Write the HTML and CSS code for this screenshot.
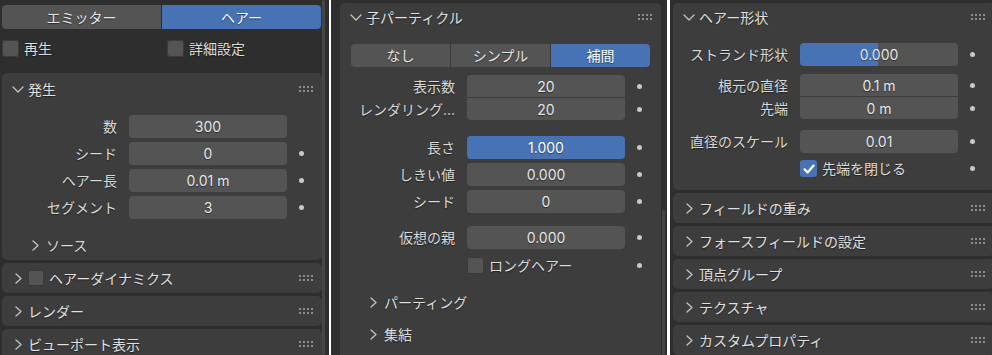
FILE: index.html
```html
<!DOCTYPE html>
<html lang="ja">
<head>
<meta charset="utf-8">
<title>Particles</title>
<link rel="stylesheet" href="styles.css">
</head>
<body>
<div class="screen">
  <!-- Column 1 -->
  <div class="col col1">
    <div class="tabs">
      <div class="tab">エミッター</div>
      <div class="tab active">ヘアー</div>
    </div>
    <div class="checks">
      <div class="chk"><span class="box"></span><span>再生</span></div>
      <div class="chk"><span class="box"></span><span>詳細設定</span></div>
    </div>

    <section class="panel p-gen">
      <div class="phead tall">
        <span class="chev"><svg width="12" height="7" viewBox="0 0 12 7"><path d="M1 1 L6 6 L11 1" /></svg></span>
        <span class="ptitle">発生</span>
        <span class="grip"><svg width="14" height="6" viewBox="0 0 14 6"><rect x="0" y="0" width="2" height="2"/><rect x="4" y="0" width="2" height="2"/><rect x="8" y="0" width="2" height="2"/><rect x="12" y="0" width="2" height="2"/><rect x="0" y="4" width="2" height="2"/><rect x="4" y="4" width="2" height="2"/><rect x="8" y="4" width="2" height="2"/><rect x="12" y="4" width="2" height="2"/></svg></span>
      </div>
      <div class="pbody b-gen">
        <div class="group">
          <div class="prop"><span class="label">数</span><span class="field">300</span><span></span></div>
          <div class="prop"><span class="label">シード</span><span class="field">0</span><span class="dot"></span></div>
          <div class="prop"><span class="label">ヘアー長</span><span class="field">0.01 m</span><span class="dot"></span></div>
          <div class="prop"><span class="label">セグメント</span><span class="field">3</span><span class="dot"></span></div>
        </div>
        <div class="sub sub-src">
          <span class="chev-c"><svg width="7" height="11" viewBox="0 0 7 11"><path d="M1 1 L6 5.5 L1 10" /></svg></span>
          <span>ソース</span>
        </div>
      </div>
    </section>

    <section class="panel closed">
      <div class="phead">
        <span class="chev-c hc"><svg width="7" height="11" viewBox="0 0 7 11"><path d="M1 1 L6 5.5 L1 10" /></svg></span>
        <span class="box hbox"></span>
        <span class="ptitle">ヘアーダイナミクス</span>
        <span class="grip"><svg width="14" height="6" viewBox="0 0 14 6"><rect x="0" y="0" width="2" height="2"/><rect x="4" y="0" width="2" height="2"/><rect x="8" y="0" width="2" height="2"/><rect x="12" y="0" width="2" height="2"/><rect x="0" y="4" width="2" height="2"/><rect x="4" y="4" width="2" height="2"/><rect x="8" y="4" width="2" height="2"/><rect x="12" y="4" width="2" height="2"/></svg></span>
      </div>
    </section>
    <section class="panel closed">
      <div class="phead">
        <span class="chev-c hc"><svg width="7" height="11" viewBox="0 0 7 11"><path d="M1 1 L6 5.5 L1 10" /></svg></span>
        <span class="ptitle">レンダー</span>
        <span class="grip"><svg width="14" height="6" viewBox="0 0 14 6"><rect x="0" y="0" width="2" height="2"/><rect x="4" y="0" width="2" height="2"/><rect x="8" y="0" width="2" height="2"/><rect x="12" y="0" width="2" height="2"/><rect x="0" y="4" width="2" height="2"/><rect x="4" y="4" width="2" height="2"/><rect x="8" y="4" width="2" height="2"/><rect x="12" y="4" width="2" height="2"/></svg></span>
      </div>
    </section>
    <section class="panel closed">
      <div class="phead">
        <span class="chev-c hc"><svg width="7" height="11" viewBox="0 0 7 11"><path d="M1 1 L6 5.5 L1 10" /></svg></span>
        <span class="ptitle">ビューポート表示</span>
        <span class="grip"><svg width="14" height="6" viewBox="0 0 14 6"><rect x="0" y="0" width="2" height="2"/><rect x="4" y="0" width="2" height="2"/><rect x="8" y="0" width="2" height="2"/><rect x="12" y="0" width="2" height="2"/><rect x="0" y="4" width="2" height="2"/><rect x="4" y="4" width="2" height="2"/><rect x="8" y="4" width="2" height="2"/><rect x="12" y="4" width="2" height="2"/></svg></span>
      </div>
    </section>
    <div class="scroll s1"></div>
  </div>

  <!-- Column 2 -->
  <div class="col col2">
    <section class="panel p-child">
      <div class="phead">
        <span class="chev"><svg width="12" height="7" viewBox="0 0 12 7"><path d="M1 1 L6 6 L11 1" /></svg></span>
        <span class="ptitle">子パーティクル</span>
        <span class="grip"><svg width="14" height="6" viewBox="0 0 14 6"><rect x="0" y="0" width="2" height="2"/><rect x="4" y="0" width="2" height="2"/><rect x="8" y="0" width="2" height="2"/><rect x="12" y="0" width="2" height="2"/><rect x="0" y="4" width="2" height="2"/><rect x="4" y="4" width="2" height="2"/><rect x="8" y="4" width="2" height="2"/><rect x="12" y="4" width="2" height="2"/></svg></span>
      </div>
      <div class="pbody b-child">
        <div class="seg">
          <div class="segi">なし</div>
          <div class="segi">シンプル</div>
          <div class="segi active">補間</div>
        </div>
        <div class="group joined g-disp">
          <div class="prop j"><span class="label">表示数</span><span class="field">20</span><span class="dot"></span></div>
          <div class="prop j"><span class="label">レンダリング...</span><span class="field">20</span><span class="dot"></span></div>
        </div>
        <div class="group g-len">
          <div class="prop"><span class="label">長さ</span><span class="field blue">1.000</span><span class="dot"></span></div>
          <div class="prop"><span class="label">しきい値</span><span class="field">0.000</span><span class="dot"></span></div>
          <div class="prop"><span class="label">シード</span><span class="field">0</span><span class="dot"></span></div>
        </div>
        <div class="group g-virt">
          <div class="prop"><span class="label">仮想の親</span><span class="field">0.000</span><span class="dot"></span></div>
        </div>
        <div class="prop chkrow c-long"><span></span><span class="chk"><span class="box"></span><span>ロングヘアー</span></span><span class="dot"></span></div>
        <div class="sub sub-part">
          <span class="chev-c"><svg width="7" height="11" viewBox="0 0 7 11"><path d="M1 1 L6 5.5 L1 10" /></svg></span>
          <span>パーティング</span>
        </div>
        <div class="sub sub-clump">
          <span class="chev-c"><svg width="7" height="11" viewBox="0 0 7 11"><path d="M1 1 L6 5.5 L1 10" /></svg></span>
          <span>集結</span>
        </div>
      </div>
    </section>
    <div class="scroll s2"></div>
  </div>

  <!-- Column 3 -->
  <div class="col col3">
    <section class="panel p-shape">
      <div class="phead">
        <span class="chev"><svg width="12" height="7" viewBox="0 0 12 7"><path d="M1 1 L6 6 L11 1" /></svg></span>
        <span class="ptitle">ヘアー形状</span>
        <span class="grip"><svg width="14" height="6" viewBox="0 0 14 6"><rect x="0" y="0" width="2" height="2"/><rect x="4" y="0" width="2" height="2"/><rect x="8" y="0" width="2" height="2"/><rect x="12" y="0" width="2" height="2"/><rect x="0" y="4" width="2" height="2"/><rect x="4" y="4" width="2" height="2"/><rect x="8" y="4" width="2" height="2"/><rect x="12" y="4" width="2" height="2"/></svg></span>
      </div>
      <div class="pbody b-shape">
        <div class="prop p-strand"><span class="label">ストランド形状</span><span class="field slider">0.000</span><span class="dot"></span></div>
        <div class="group joined g-root">
          <div class="prop j"><span class="label">根元の直径</span><span class="field">0.1 m</span><span class="dot"></span></div>
          <div class="prop j"><span class="label">先端</span><span class="field">0 m</span><span class="dot"></span></div>
        </div>
        <div class="prop p-scale"><span class="label">直径のスケール</span><span class="field">0.01</span><span class="dot"></span></div>
        <div class="prop chkrow c-close"><span></span><span class="chk"><span class="box on"><svg width="16" height="16" viewBox="0 0 16 16"><path d="M3.5 8.3 L6.6 11.4 L12.6 4.6" /></svg></span><span>先端を閉じる</span></span><span class="dot"></span></div>
      </div>
    </section>
    <section class="panel closed">
      <div class="phead">
        <span class="chev-c hc"><svg width="7" height="11" viewBox="0 0 7 11"><path d="M1 1 L6 5.5 L1 10" /></svg></span>
        <span class="ptitle">フィールドの重み</span>
        <span class="grip"><svg width="14" height="6" viewBox="0 0 14 6"><rect x="0" y="0" width="2" height="2"/><rect x="4" y="0" width="2" height="2"/><rect x="8" y="0" width="2" height="2"/><rect x="12" y="0" width="2" height="2"/><rect x="0" y="4" width="2" height="2"/><rect x="4" y="4" width="2" height="2"/><rect x="8" y="4" width="2" height="2"/><rect x="12" y="4" width="2" height="2"/></svg></span>
      </div>
    </section>
    <section class="panel closed">
      <div class="phead">
        <span class="chev-c hc"><svg width="7" height="11" viewBox="0 0 7 11"><path d="M1 1 L6 5.5 L1 10" /></svg></span>
        <span class="ptitle">フォースフィールドの設定</span>
        <span class="grip"><svg width="14" height="6" viewBox="0 0 14 6"><rect x="0" y="0" width="2" height="2"/><rect x="4" y="0" width="2" height="2"/><rect x="8" y="0" width="2" height="2"/><rect x="12" y="0" width="2" height="2"/><rect x="0" y="4" width="2" height="2"/><rect x="4" y="4" width="2" height="2"/><rect x="8" y="4" width="2" height="2"/><rect x="12" y="4" width="2" height="2"/></svg></span>
      </div>
    </section>
    <section class="panel closed">
      <div class="phead">
        <span class="chev-c hc"><svg width="7" height="11" viewBox="0 0 7 11"><path d="M1 1 L6 5.5 L1 10" /></svg></span>
        <span class="ptitle">頂点グループ</span>
        <span class="grip"><svg width="14" height="6" viewBox="0 0 14 6"><rect x="0" y="0" width="2" height="2"/><rect x="4" y="0" width="2" height="2"/><rect x="8" y="0" width="2" height="2"/><rect x="12" y="0" width="2" height="2"/><rect x="0" y="4" width="2" height="2"/><rect x="4" y="4" width="2" height="2"/><rect x="8" y="4" width="2" height="2"/><rect x="12" y="4" width="2" height="2"/></svg></span>
      </div>
    </section>
    <section class="panel closed">
      <div class="phead">
        <span class="chev-c hc"><svg width="7" height="11" viewBox="0 0 7 11"><path d="M1 1 L6 5.5 L1 10" /></svg></span>
        <span class="ptitle">テクスチャ</span>
        <span class="grip"><svg width="14" height="6" viewBox="0 0 14 6"><rect x="0" y="0" width="2" height="2"/><rect x="4" y="0" width="2" height="2"/><rect x="8" y="0" width="2" height="2"/><rect x="12" y="0" width="2" height="2"/><rect x="0" y="4" width="2" height="2"/><rect x="4" y="4" width="2" height="2"/><rect x="8" y="4" width="2" height="2"/><rect x="12" y="4" width="2" height="2"/></svg></span>
      </div>
    </section>
    <section class="panel closed">
      <div class="phead">
        <span class="chev-c hc"><svg width="7" height="11" viewBox="0 0 7 11"><path d="M1 1 L6 5.5 L1 10" /></svg></span>
        <span class="ptitle">カスタムプロパティ</span>
        <span class="grip"><svg width="14" height="6" viewBox="0 0 14 6"><rect x="0" y="0" width="2" height="2"/><rect x="4" y="0" width="2" height="2"/><rect x="8" y="0" width="2" height="2"/><rect x="12" y="0" width="2" height="2"/><rect x="0" y="4" width="2" height="2"/><rect x="4" y="4" width="2" height="2"/><rect x="8" y="4" width="2" height="2"/><rect x="12" y="4" width="2" height="2"/></svg></span>
      </div>
    </section>
  </div>
</div>
</body>
</html>
```
FILE: styles.css
```css
* { box-sizing: border-box; }

html, body {
  margin: 0;
  padding: 0;
  background: #ffffff;
}

body {
  font-family: Inter, "Noto Sans CJK JP", sans-serif;
  font-size: 14px;
  line-height: 17px;
  color: #dcdcdc;
}

.screen {
  display: flex;
  width: 992px;
  height: 355px;
  overflow: hidden;
}

.col {
  flex: none;
  position: relative;
  height: 355px;
  overflow: hidden;
  background: #2e2e2e;
}

.col1 { width: 329px; padding: 5px 0 0 2px; }
.col2 { width: 336px; margin-left: 2px; padding: 3px 0 0 9px; }
.col3 { width: 322px; margin-left: 3px; padding: 3px 0 0 3px; }

/* top tabs */
.tabs {
  display: flex;
  width: 319px;
  height: 24px;
  border-radius: 4px;
  overflow: hidden;
  gap: 1px;
  background: #2a2a2a;
}
.tab {
  flex: 1;
  display: flex;
  align-items: center;
  justify-content: center;
  background: #545454;
  color: #e6e6e6;
  text-shadow: 0 1px 1px rgba(0,0,0,0.45);
}
.tab.active { background: #4772b3; color: #ffffff; }

.checks {
  display: grid;
  grid-template-columns: 165px 1fr;
  margin-top: 10px;
  height: 18px;
}

.chk {
  display: flex;
  align-items: center;
  gap: 5px;
  white-space: nowrap;
  color: #dcdcdc;
  text-shadow: 0 1px 1px rgba(0,0,0,0.45);
}

.box {
  flex: none;
  width: 17px;
  height: 17px;
  border-radius: 3px;
  background: #545454;
  box-shadow: inset 0 0 0 1px #3a3a3a;
  display: flex;
  align-items: center;
  justify-content: center;
}
.box.on { background: #4772b3; box-shadow: none; }
.box.on path { fill: none; stroke: #ffffff; stroke-width: 2.2; stroke-linecap: round; stroke-linejoin: round; }

/* panels */
.panel {
  width: 321px;
  background: #3d3d3d;
  border-radius: 5px;
}
.col1 .panel { width: 320px; }
.p-gen { margin-top: 16px; }
.closed { margin-top: 3px; }
.p-child { height: 360px; }

.phead {
  display: flex;
  align-items: center;
  height: 28px;
  padding: 0 9px 0 10px;
  color: #e0e0e0;
  text-shadow: 0 1px 1px rgba(0,0,0,0.45);
}
.phead.tall { height: 32px; }
.closed .phead { height: 30px; }

.chev { width: 12px; height: 7px; display: flex; margin-right: 4px; }
.chev svg path, .chev-c svg path {
  fill: none;
  stroke: #c4c4c4;
  stroke-width: 1.3;
  stroke-linecap: round;
  stroke-linejoin: round;
}
.chev-c { width: 7px; height: 11px; display: flex; flex: none; }
.chev-c.hc { margin-left: 3px; margin-right: 6px; }

.hbox { width: 16px; height: 16px; margin-right: 5px; }

.ptitle { flex: 1; white-space: nowrap; }

.grip { display: flex; width: 14px; height: 6px; }
.grip svg rect { fill: #8c8c8c; }

/* property rows */
.group { display: flex; flex-direction: column; gap: 4px; }
.group.joined { gap: 1px; }

.prop {
  display: grid;
  grid-template-columns: 115px 158px 24px;
  column-gap: 12px;
  height: 23px;
  align-items: center;
}
.prop.j { height: 22px; }

.label {
  text-align: right;
  white-space: nowrap;
  color: #d8d8d8;
  text-shadow: 0 1px 1px rgba(0,0,0,0.45);
}

.field {
  height: 100%;
  display: flex;
  align-items: center;
  justify-content: center;
  background: #545454;
  border-radius: 4px;
  color: #e6e6e6;
  white-space: nowrap;
  text-shadow: 0 1px 1px rgba(0,0,0,0.45);
}
.field.blue { background: #4772b3; color: #ffffff; }
.field.slider { background: linear-gradient(to right, #4772b3 0, #4772b3 78px, #545454 78px); }

.joined .prop:first-child .field { border-radius: 4px 4px 0 0; }
.joined .prop:last-child .field { border-radius: 0 0 4px 4px; }

.dot {
  width: 5px;
  height: 5px;
  border-radius: 50%;
  background: #c8c8c8;
}

.sub {
  display: flex;
  align-items: center;
  gap: 7px;
  height: 24px;
  padding-left: 30px;
  color: #dcdcdc;
  text-shadow: 0 1px 1px rgba(0,0,0,0.45);
}

/* column 1 body */
.b-gen { padding: 10px 0 3px; }
.sub-src { margin-top: 14px; }

/* column 2 body */
.seg {
  display: flex;
  gap: 1px;
  width: 299px;
  height: 23px;
  margin: 13px 0 0 11px;
  border-radius: 4px;
  overflow: hidden;
  background: #3a3a3a;
}
.segi {
  flex: 1;
  display: flex;
  align-items: center;
  justify-content: center;
  background: #545454;
  color: #e6e6e6;
  text-shadow: 0 1px 1px rgba(0,0,0,0.45);
}
.segi.active { background: #4772b3; color: #ffffff; }
.g-disp { margin-top: 8px; }
.g-len { margin-top: 16px; }
.g-virt { margin-top: 13px; }
.c-long { margin-top: 7px; height: 18px; }
.sub-part { margin-top: 16px; }
.sub-clump { margin-top: 8px; }

/* column 3 body */
.b-shape { padding-bottom: 10px; }
.p-strand { margin-top: 12px; }
.g-root { margin-top: 8px; }
.p-scale { margin-top: 11px; }
.c-close { margin-top: 4px; }

/* scrollbars */
.scroll {
  position: absolute;
  width: 3px;
  border-radius: 2px;
  background: #464646;
}
.s1 { right: 4px; top: 0; bottom: 0; }
.s2 { right: 2px; top: 210px; bottom: 0; }
```
